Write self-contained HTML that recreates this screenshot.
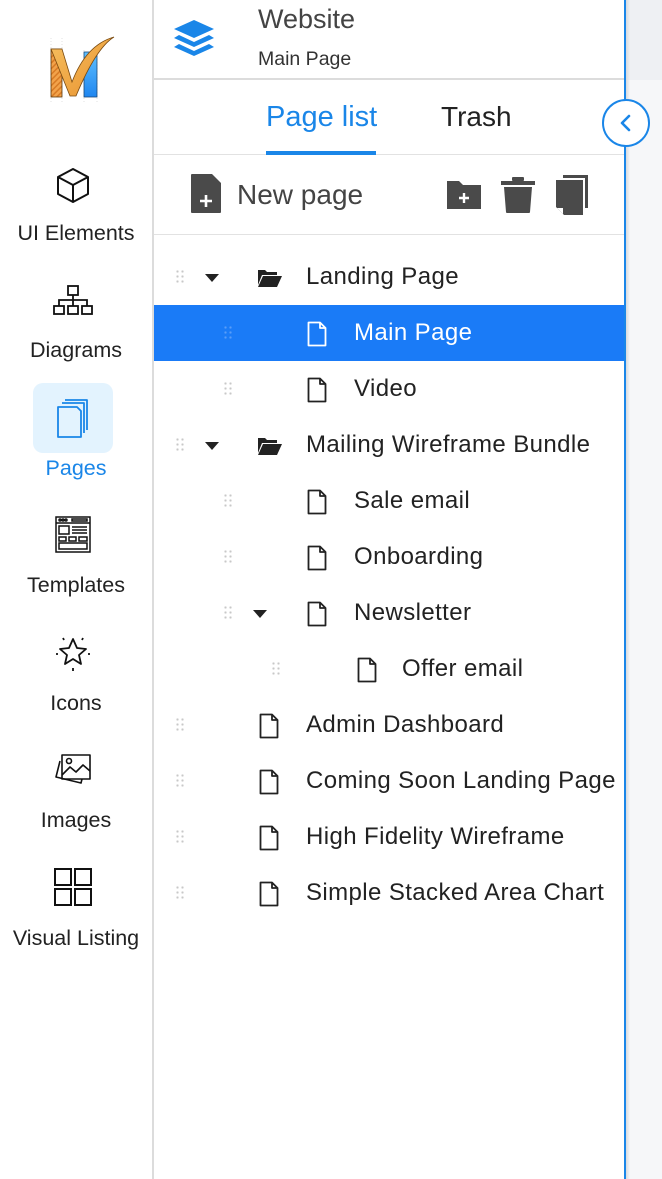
<!DOCTYPE html>
<html><head><meta charset="utf-8"><style>
*{margin:0;padding:0;box-sizing:border-box}
body{width:662px;height:1179px;position:relative;overflow:hidden;background:#fff;font-family:"Liberation Sans",Arial,sans-serif;color:#222}
.a{position:absolute}
.lbl{position:absolute;left:0;width:152px;text-align:center;font-size:21.5px;color:#222}
.ic{position:absolute;left:50px;width:46px;height:46px}
.row{position:absolute;left:154px;width:470px;height:56px;font-size:24px;letter-spacing:0.4px;color:#222}
.row .t{position:absolute;top:14px;white-space:nowrap}
.dots{position:absolute;top:20px;width:10px;height:16px;background-image:radial-gradient(circle,#c8c8c8 1px,transparent 1.3px);background-size:5px 5px}
.tri{position:absolute;top:25px;width:0;height:0;border-left:7px solid transparent;border-right:7px solid transparent;border-top:8px solid #222}
.doc{position:absolute;top:16px;width:20px;height:26px}
</style></head><body>
<div class="a" style="left:152px;top:0;width:2px;height:1179px;background:#dcdcdc"></div>
<svg class="a" style="left:46px;top:34px" width="72" height="70" viewBox="46 34 72 70">
<defs><pattern id="h" width="4" height="4" patternUnits="userSpaceOnUse" patternTransform="rotate(45)"><rect width="4" height="4" fill="#f2a24a"/><rect width="1.5" height="4" fill="#d77a24"/></pattern>
<linearGradient id="o" x1="0" y1="0" x2="1" y2="1"><stop offset="0" stop-color="#f6c060"/><stop offset="1" stop-color="#e8912e"/></linearGradient>
<linearGradient id="b" x1="0" y1="0" x2="0" y2="1"><stop offset="0" stop-color="#5fc0ff"/><stop offset="1" stop-color="#1f86f0"/></linearGradient></defs>
<g stroke="#ccc" stroke-dasharray="1 2" stroke-width="0.6"><line x1="51" y1="38" x2="51" y2="107"/><line x1="62" y1="38" x2="62" y2="107"/><line x1="84" y1="50" x2="84" y2="107"/><line x1="97" y1="50" x2="97" y2="107"/></g>
<rect x="51" y="49" width="11" height="48" fill="url(#h)" stroke="#5a3a10" stroke-width="0.8"/>
<rect x="84" y="52" width="13" height="45" fill="url(#b)" stroke="#1b4a7a" stroke-width="0.8"/>
<path d="M51 49 L62 49 L72 82 Q86 45 114 37 Q96 48 76 96 L70 96 Z" fill="url(#o)" stroke="#7a4a10" stroke-width="0.8"/>
</svg>
<svg class="ic" style="top:163px" viewBox="0 0 46 46" fill="none" stroke="#111" stroke-width="2" stroke-linejoin="round"><path d="M23 6 L38 14 V31 L23 39 L8 31 V14 Z M8 14 L23 22 L38 14 M23 22 V39"/></svg>
<div class="lbl" style="top:221px">UI Elements</div>
<svg class="ic" style="top:280px" viewBox="0 0 46 46" fill="none" stroke="#111" stroke-width="1.8"><rect x="18" y="6" width="10" height="9"/><path d="M23 15 V20 M9 26 V20 H37 V26 M23 20 V26"/><rect x="4" y="26" width="10" height="8"/><rect x="18" y="26" width="10" height="8"/><rect x="32" y="26" width="10" height="8"/></svg>
<div class="lbl" style="top:338px">Diagrams</div>
<div class="a" style="left:33px;top:383px;width:80px;height:70px;border-radius:10px;background:#e3f3fe"></div>
<svg class="a" style="left:55px;top:396px" width="36" height="44" viewBox="0 0 36 44" fill="none" stroke="#1a86e8" stroke-width="1.8" stroke-linejoin="round"><path d="M10 4 H32 V34"/><path d="M7 7 H29 V37"/><path d="M3 11 H22 L26 15 V41 H3 Z"/></svg>
<div class="lbl" style="top:456px;color:#1a86e8">Pages</div>
<svg class="ic" style="top:512px" viewBox="0 0 46 46" fill="none" stroke="#111" stroke-width="1.5"><rect x="6" y="5" width="34" height="35"/><path d="M6 11 H40"/><circle cx="10" cy="8" r="1"/><circle cx="13" cy="8" r="1"/><circle cx="16" cy="8" r="1"/><rect x="22" y="7" width="15" height="2"/><rect x="9" y="14" width="10" height="8"/><path d="M22 15 H37 M22 18 H37 M22 21 H37"/><rect x="9" y="25" width="7" height="4"/><rect x="19" y="25" width="7" height="4"/><rect x="29" y="25" width="8" height="4"/><rect x="9" y="31" width="28" height="6"/></svg>
<div class="lbl" style="top:573px">Templates</div>
<svg class="ic" style="top:630px" viewBox="0 0 46 46" fill="none" stroke="#111" stroke-width="1.8" stroke-linejoin="round"><path d="M23 9 L27 18 L36 19 L29 25 L31 34 L23 29 L15 34 L17 25 L10 19 L19 18 Z"/><path d="M13 8 L14 10 M33 8 L32 10 M6 24 H8 M38 24 H40 M23 38 V41"/></svg>
<div class="lbl" style="top:691px">Icons</div>
<svg class="ic" style="top:747px" viewBox="0 0 46 46" fill="none" stroke="#111" stroke-width="1.6" stroke-linejoin="round"><rect x="12" y="8" width="28" height="24"/><circle cx="19" cy="14" r="2.5"/><path d="M12 28 L20 20 L26 25 L33 18 L40 24"/><path d="M10 14 L6 30 L31 36 L32 32"/></svg>
<div class="lbl" style="top:808px">Images</div>
<svg class="ic" style="top:865px" viewBox="0 0 46 46" fill="none" stroke="#111" stroke-width="2"><rect x="5" y="4" width="16" height="16"/><rect x="25" y="4" width="16" height="16"/><rect x="5" y="24" width="16" height="16"/><rect x="25" y="24" width="16" height="16"/></svg>
<div class="lbl" style="top:926px">Visual Listing</div>

<div class="a" style="left:626px;top:0;width:36px;height:80px;background:#eef0f3"></div>
<div class="a" style="left:626px;top:80px;width:36px;height:1099px;background:#f6f7f9"></div>
<div class="a" style="left:626px;top:0;width:4px;height:1179px;background:linear-gradient(90deg,#d8dadd,transparent)"></div>
<div class="a" style="left:624px;top:0;width:2px;height:1179px;background:#1a86e8"></div>
<div class="a" style="left:602px;top:99px;width:48px;height:48px;border-radius:50%;background:#fff;border:2px solid #1a86e8"></div>
<svg class="a" style="left:616px;top:111px" width="20" height="24" viewBox="0 0 20 24"><path d="M13 5 L6 12 L13 19" fill="none" stroke="#1a86e8" stroke-width="2.6" stroke-linecap="round" stroke-linejoin="round"/></svg>

<svg class="a" style="left:172px;top:18px" width="44" height="44" viewBox="0 0 44 44" fill="#1a86e8"><path d="M22 2 L42 11 L22 20 L2 11 Z"/><path d="M7 17 L22 24 L37 17 L42 20 L22 29 L2 20 Z"/><path d="M7 26 L22 33 L37 26 L42 29 L22 38 L2 29 Z"/></svg>
<div class="a" style="left:258px;top:4px;font-size:27px;color:#444">Website</div>
<div class="a" style="left:258px;top:48px;font-size:19.5px;color:#333">Main Page</div>
<div class="a" style="left:154px;top:78px;width:470px;height:2px;background:#dcdcdc"></div>
<div class="a" style="left:266px;top:101px;font-size:29px;color:#1a86e8">Page list</div>
<div class="a" style="left:441px;top:101px;font-size:28px;color:#222">Trash</div>
<div class="a" style="left:154px;top:154px;width:470px;height:1px;background:#e2e2e2"></div>
<div class="a" style="left:266px;top:151px;width:110px;height:4px;background:#1a86e8"></div>
<svg class="a" style="left:190px;top:173px" width="32" height="41" viewBox="0 0 32 41"><path d="M2 1 H22 L31 10 V39 Q31 40 30 40 H2 Q1 40 1 39 V2 Q1 1 2 1 Z" fill="#4a4a4a"/><path d="M16 22 V34 M10 28 H22" stroke="#fff" stroke-width="2.6"/></svg>
<div class="a" style="left:237px;top:179px;font-size:28px;color:#444">New page</div>
<svg class="a" style="left:446px;top:180px" width="36" height="30" viewBox="0 0 36 30"><path d="M1 1 H13 L17 5 H35 V29 H1 Z" fill="#4a4a4a"/><path d="M18 13 V23 M13 18 H23" stroke="#fff" stroke-width="2.4"/></svg>
<svg class="a" style="left:500px;top:176px" width="36" height="38" viewBox="0 0 36 38" fill="#4a4a4a"><rect x="12" y="1" width="12" height="4" rx="1"/><rect x="1" y="5" width="34" height="4"/><path d="M4 11 H32 L30 36 Q30 37 29 37 H7 Q6 37 6 36 Z"/></svg>
<svg class="a" style="left:555px;top:174px" width="34" height="42" viewBox="0 0 34 42"><path d="M8 1 H33 V34 H30 V4 H8 Z" fill="#4a4a4a"/><path d="M1 6 H28 V41 H9 L1 33 Z" fill="#4a4a4a"/><path d="M2 34 L8 34 L8 40" fill="#fff"/></svg>
<div class="a" style="left:154px;top:234px;width:470px;height:1px;background:#e2e2e2"></div>

<div class="row" style="top:249px"><div class="dots" style="left:21px"></div><div class="tri" style="left:51px"></div>
<svg class="a" style="left:103px;top:19px" width="26" height="20" viewBox="0 0 26 20" fill="#222"><path d="M1 2 H8 L10 4 H20 V7 H5 L1 17 Z"/><path d="M6 8 H25 L20 19 H1 Z"/></svg><div class="t" style="left:152px">Landing Page</div></div>
<div class="row" style="top:305px;background:#1a7bf7;color:#fff"><div class="dots" style="left:69px;background-image:radial-gradient(circle,#5a9ef8 1px,transparent 1.3px)"></div>
<svg class="doc" style="left:153px" viewBox="0 0 20 26"><path d="M1.5 1.5 H13 L18.5 7 V24.5 H1.5 Z M13 1.5 V7 H18.5" fill="none" stroke="#fff" stroke-width="1.8" stroke-linejoin="round"/></svg><div class="t" style="left:200px">Main Page</div></div>
<div class="row" style="top:361px"><div class="dots" style="left:69px"></div>
<svg class="doc" style="left:153px" viewBox="0 0 20 26"><path d="M1.5 1.5 H13 L18.5 7 V24.5 H1.5 Z M13 1.5 V7 H18.5" fill="none" stroke="#222" stroke-width="1.8" stroke-linejoin="round"/></svg><div class="t" style="left:200px">Video</div></div>
<div class="row" style="top:417px"><div class="dots" style="left:21px"></div><div class="tri" style="left:51px"></div>
<svg class="a" style="left:103px;top:19px" width="26" height="20" viewBox="0 0 26 20" fill="#222"><path d="M1 2 H8 L10 4 H20 V7 H5 L1 17 Z"/><path d="M6 8 H25 L20 19 H1 Z"/></svg><div class="t" style="left:152px">Mailing Wireframe Bundle</div></div>
<div class="row" style="top:473px"><div class="dots" style="left:69px"></div>
<svg class="doc" style="left:153px" viewBox="0 0 20 26"><path d="M1.5 1.5 H13 L18.5 7 V24.5 H1.5 Z M13 1.5 V7 H18.5" fill="none" stroke="#222" stroke-width="1.8" stroke-linejoin="round"/></svg><div class="t" style="left:200px">Sale email</div></div>
<div class="row" style="top:529px"><div class="dots" style="left:69px"></div>
<svg class="doc" style="left:153px" viewBox="0 0 20 26"><path d="M1.5 1.5 H13 L18.5 7 V24.5 H1.5 Z M13 1.5 V7 H18.5" fill="none" stroke="#222" stroke-width="1.8" stroke-linejoin="round"/></svg><div class="t" style="left:200px">Onboarding</div></div>
<div class="row" style="top:585px"><div class="dots" style="left:69px"></div><div class="tri" style="left:99px"></div>
<svg class="doc" style="left:153px" viewBox="0 0 20 26"><path d="M1.5 1.5 H13 L18.5 7 V24.5 H1.5 Z M13 1.5 V7 H18.5" fill="none" stroke="#222" stroke-width="1.8" stroke-linejoin="round"/></svg><div class="t" style="left:200px">Newsletter</div></div>
<div class="row" style="top:641px"><div class="dots" style="left:117px"></div>
<svg class="doc" style="left:203px" viewBox="0 0 20 26"><path d="M1.5 1.5 H13 L18.5 7 V24.5 H1.5 Z M13 1.5 V7 H18.5" fill="none" stroke="#222" stroke-width="1.8" stroke-linejoin="round"/></svg><div class="t" style="left:248px">Offer email</div></div>
<div class="row" style="top:697px"><div class="dots" style="left:21px"></div>
<svg class="doc" style="left:105px" viewBox="0 0 20 26"><path d="M1.5 1.5 H13 L18.5 7 V24.5 H1.5 Z M13 1.5 V7 H18.5" fill="none" stroke="#222" stroke-width="1.8" stroke-linejoin="round"/></svg><div class="t" style="left:152px">Admin Dashboard</div></div>
<div class="row" style="top:753px"><div class="dots" style="left:21px"></div>
<svg class="doc" style="left:105px" viewBox="0 0 20 26"><path d="M1.5 1.5 H13 L18.5 7 V24.5 H1.5 Z M13 1.5 V7 H18.5" fill="none" stroke="#222" stroke-width="1.8" stroke-linejoin="round"/></svg><div class="t" style="left:152px">Coming Soon Landing Page</div></div>
<div class="row" style="top:809px"><div class="dots" style="left:21px"></div>
<svg class="doc" style="left:105px" viewBox="0 0 20 26"><path d="M1.5 1.5 H13 L18.5 7 V24.5 H1.5 Z M13 1.5 V7 H18.5" fill="none" stroke="#222" stroke-width="1.8" stroke-linejoin="round"/></svg><div class="t" style="left:152px">High Fidelity Wireframe</div></div>
<div class="row" style="top:865px"><div class="dots" style="left:21px"></div>
<svg class="doc" style="left:105px" viewBox="0 0 20 26"><path d="M1.5 1.5 H13 L18.5 7 V24.5 H1.5 Z M13 1.5 V7 H18.5" fill="none" stroke="#222" stroke-width="1.8" stroke-linejoin="round"/></svg><div class="t" style="left:152px">Simple Stacked Area Chart</div></div>
</body></html>
